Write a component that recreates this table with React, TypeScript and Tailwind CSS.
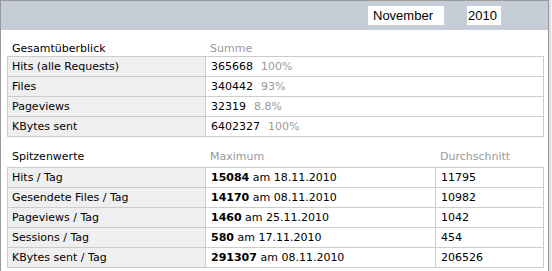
import React from "react";

const font = { fontFamily: '"DejaVu Sans", Verdana, sans-serif' };

type Row1 = { label: string; value: string; pct: string };
const rows1: Row1[] = [
  { label: "Hits (alle Requests)", value: "365668", pct: "100%" },
  { label: "Files", value: "340442", pct: "93%" },
  { label: "Pageviews", value: "32319", pct: "8.8%" },
  { label: "KBytes sent", value: "6402327", pct: "100%" },
];

type Row2 = { label: string; max: string; date: string; avg: string };
const rows2: Row2[] = [
  { label: "Hits / Tag", max: "15084", date: "18.11.2010", avg: "11795" },
  { label: "Gesendete Files / Tag", max: "14170", date: "08.11.2010", avg: "10982" },
  { label: "Pageviews / Tag", max: "1460", date: "25.11.2010", avg: "1042" },
  { label: "Sessions / Tag", max: "580", date: "17.11.2010", avg: "454" },
  { label: "KBytes sent / Tag", max: "291307", date: "08.11.2010", avg: "206526" },
];

export default function App() {
  return (
    <div className="w-[552px] h-[271px] bg-white overflow-hidden">
      <div
        className="w-[549px] h-[300px] border border-[#999999] bg-white shadow-[2px_0_2px_rgba(0,0,0,0.15)] text-[11px] text-black"
        style={font}
      >
        {/* header */}
        <div className="h-[29px] bg-[#c5cdd6] flex items-center justify-end pr-[47px]">
          <div
            className="w-[76px] h-[19px] bg-white flex items-center pl-[5px] text-[13px] leading-[19px]"
            style={{ fontFamily: '"Liberation Sans", Arial, sans-serif' }}
          >
            November
          </div>
          <div
            className="ml-[23px] w-[34px] h-[19px] bg-white flex items-center pl-[1px] text-[13px] leading-[19px]"
            style={{ fontFamily: '"Liberation Sans", Arial, sans-serif' }}
          >
            2010
          </div>
        </div>

        <div className="pl-[6px]">
          {/* Section 1 */}
          <div className="mt-[12px] h-[14px] leading-[14px] grid grid-cols-[198px_1fr]">
            <div className="pl-[5px]">Gesamtüberblick</div>
            <div className="pl-[5px] text-[#999999]">Summe</div>
          </div>
          <div className="w-[537px] border-t border-l border-r border-[#cccccc]">
            {rows1.map((r) => (
              <div
                key={r.label}
                className="h-[20px] border-b border-[#cccccc] grid grid-cols-[198px_1fr] leading-[19px]"
              >
                <div className="bg-[#efefef] border-r border-[#cccccc] pl-[4px]">{r.label}</div>
                <div className="pl-[5px]">
                  {r.value}
                  <span className="ml-[8px] text-[#999999]">{r.pct}</span>
                </div>
              </div>
            ))}
          </div>

          {/* Section 2 */}
          <div className="mt-[13px] h-[17px] leading-[14px] grid grid-cols-[198px_230px_1fr]">
            <div className="pl-[5px]">Spitzenwerte</div>
            <div className="pl-[5px] text-[#999999]">Maximum</div>
            <div className="pl-[5px] text-[#999999]">Durchschnitt</div>
          </div>
          <div className="w-[537px] border-t border-l border-r border-[#cccccc]">
            {rows2.map((r) => (
              <div
                key={r.label}
                className="h-[20px] border-b border-[#cccccc] grid grid-cols-[198px_230px_1fr] leading-[19px]"
              >
                <div className="bg-[#efefef] border-r border-[#cccccc] pl-[4px]">{r.label}</div>
                <div className="border-r border-[#cccccc] pl-[5px]">
                  <span className="font-bold">{r.max}</span> am {r.date}
                </div>
                <div className="pl-[5px]">{r.avg}</div>
              </div>
            ))}
          </div>
        </div>
      </div>
    </div>
  );
}
